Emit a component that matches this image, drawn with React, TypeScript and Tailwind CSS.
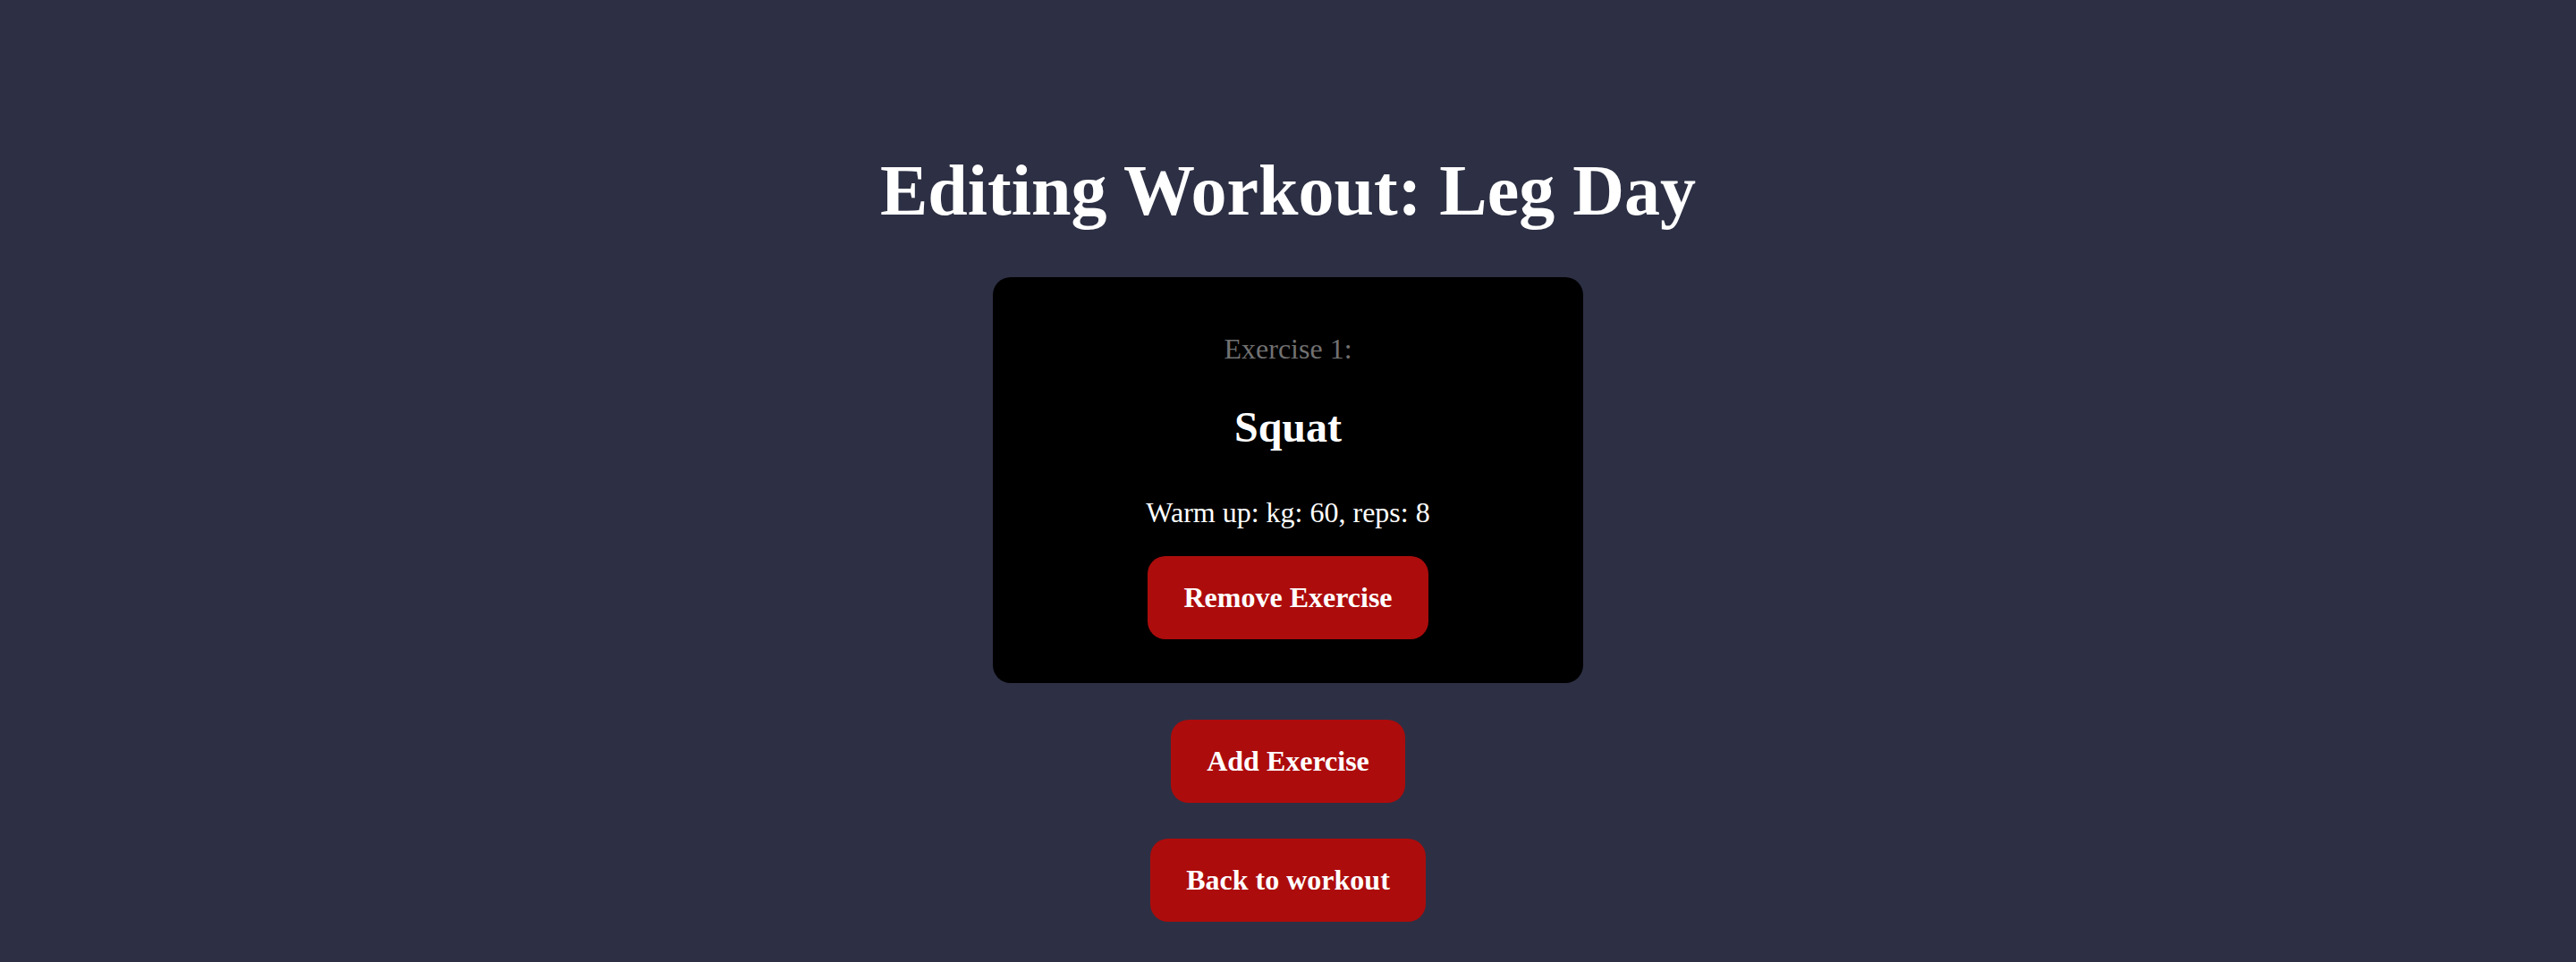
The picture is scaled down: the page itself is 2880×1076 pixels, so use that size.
export default function App() {
  return (
    <div className="min-h-screen w-full bg-[#2d3044] flex flex-col items-center pt-[167px] pb-[45px] font-['Liberation_Serif',serif] text-white">
      <h1 className="text-[80px] leading-[92px] font-bold">Editing Workout: Leg Day</h1>
      <div className="mt-[51px] w-[660px] bg-black rounded-[20px] flex flex-col items-center pt-[62px] pb-[49px]">
        <p className="text-[32px] leading-[37px] text-[#717171]">Exercise 1:</p>
        <h2 className="mt-[41px] text-[48px] leading-[55px] font-bold">Squat</h2>
        <p className="mt-[50px] text-[32px] leading-[37px]">Warm up: kg: 60, reps: 8</p>
        <button className="mt-[30px] bg-[#ad0c0c] rounded-[20px] px-[40px] py-[28px] text-[32px] leading-[37px] font-bold text-white">
          Remove Exercise
        </button>
      </div>
      <button className="mt-[41px] bg-[#ad0c0c] rounded-[20px] px-[40px] py-[28px] text-[32px] leading-[37px] font-bold text-white">
        Add Exercise
      </button>
      <button className="mt-[40px] bg-[#ad0c0c] rounded-[20px] px-[40px] py-[28px] text-[32px] leading-[37px] font-bold text-white">
        Back to workout
      </button>
    </div>
  );
}
